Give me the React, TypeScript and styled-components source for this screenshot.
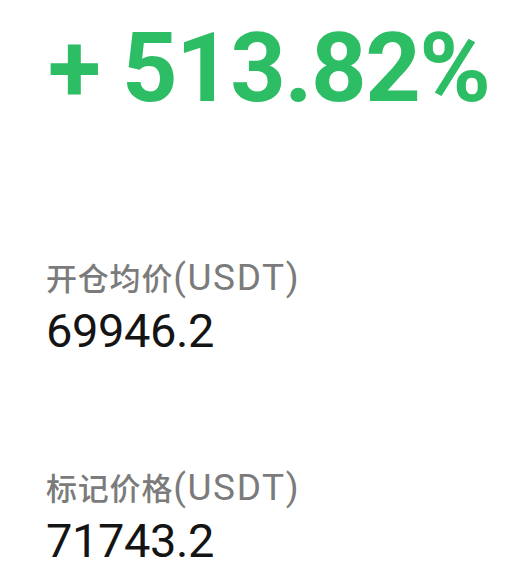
import styled, { createGlobalStyle } from "styled-components";

const GlobalStyle = createGlobalStyle`
  html, body {
    margin: 0;
    padding: 0;
    background: #ffffff;
  }
`;

const Page = styled.div`
  display: flex;
  flex-direction: column;
  width: 507px;
  height: 580px;
  padding: 20px 0 0 46px;
  box-sizing: border-box;
  overflow: hidden;
`;

const Profit = styled.div`
  margin-left: 2px;
  font-family: Roboto, "Noto Sans", sans-serif;
  font-size: 97px;
  font-weight: 700;
  line-height: 1;
  letter-spacing: -1.5px;
  color: #2dbd64;
  white-space: nowrap;
`;

const Stats = styled.div`
  display: flex;
  flex-direction: column;
  gap: 115px;
  margin-top: 142px;
`;

const Stat = styled.div`
  display: flex;
  flex-direction: column;
  gap: 11px;
`;

const Label = styled.div`
  font-family: "Noto Sans CJK SC", "Noto Sans", sans-serif;
  font-size: 31px;
  font-weight: 500;
  line-height: 36px;
  letter-spacing: 0.8px;
  color: #7b7b7b;
  white-space: nowrap;
`;

const Unit = styled.span`
  font-family: Roboto, "Noto Sans", sans-serif;
  font-size: 37px;
  font-weight: 400;
  letter-spacing: 1.6px;
`;

const Value = styled.div`
  font-family: Roboto, "Noto Sans", sans-serif;
  font-size: 47px;
  line-height: 47px;
  letter-spacing: -0.4px;
  color: #141414;
  white-space: nowrap;
`;

const stats = [
  { label: "开仓均价", unit: "(USDT)", value: "69946.2" },
  { label: "标记价格", unit: "(USDT)", value: "71743.2" },
];

export default function App() {
  return (
    <>
      <GlobalStyle />
      <Page>
        <Profit>+ 513.82%</Profit>
        <Stats>
          {stats.map((s) => (
            <Stat key={s.label}>
              <Label>
                {s.label}
                <Unit>{s.unit}</Unit>
              </Label>
              <Value>{s.value}</Value>
            </Stat>
          ))}
        </Stats>
      </Page>
    </>
  );
}
